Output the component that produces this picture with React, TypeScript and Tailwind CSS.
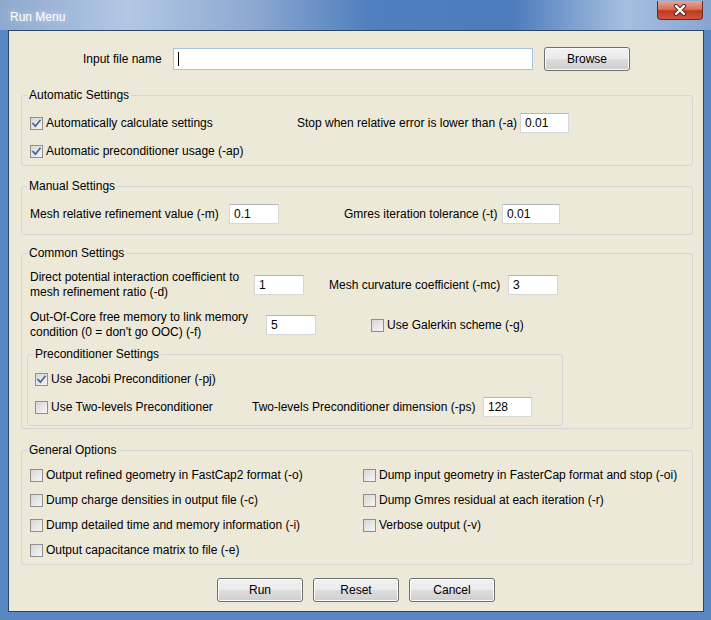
import React from "react";

function Check({ checked = false }: { checked?: boolean }) {
  return (
    <span className="w-[13px] h-[13px] shrink-0 border border-[#8e8f8f] bg-[linear-gradient(135deg,#d6d6d6,#f6f6f6)] flex items-center justify-center">
      {checked && (
        <svg width="11" height="11" viewBox="0 0 11 11" fill="none">
          <path
            d="M2 5.6 4.4 8.2 9 2.4"
            stroke="#4a62a0"
            strokeWidth="1.7"
            strokeLinecap="square"
          />
        </svg>
      )}
    </span>
  );
}

function CheckRow({ label, checked = false }: { label: string; checked?: boolean }) {
  return (
    <div className="h-[20px] flex items-center gap-[3px]">
      <Check checked={checked} />
      <span>{label}</span>
    </div>
  );
}

function Field({ value, className = "" }: { value: string; className?: string }) {
  return (
    <div
      className={`h-[20px] shrink-0 bg-white border border-[#d3d7dc] border-t-[#b3b7bd] pl-[4px] flex items-center ${className}`}
    >
      {value}
    </div>
  );
}

function Btn({ label }: { label: string }) {
  return (
    <button className="w-[86px] h-[24px] border border-[#707070] rounded-[3px] bg-[linear-gradient(#f2f2f2_0%,#ebebeb_50%,#dddddd_51%,#cfcfcf_100%)] shadow-[inset_0_0_0_1px_#fbfbfb] text-black">
      {label}
    </button>
  );
}

export default function App() {
  return (
    <div className="w-[711px] h-[620px] bg-[#5a87c3] flex flex-col font-['Liberation_Sans',Arial,sans-serif] text-[12px] text-black">
      {/* title bar */}
      <div className="h-[30px] shrink-0 flex items-start bg-[linear-gradient(90deg,#8ea9cd_0%,#b3c8e4_18%,#8eaad2_35%,#4f7fbe_52%,#4c7cbc_72%,#a6bfe0_88%,#86a5cf_100%)]">
        <span className="ml-[10px] mt-[8px] text-white text-[12px] [text-shadow:0_0_6px_rgba(255,255,255,0.6)]">
          Run Menu
        </span>
        <div className="ml-auto mr-[8px] mt-[1px] w-[46px] h-[19px] rounded-b-[4px] border border-[#6b2a1f] border-t-0 bg-[linear-gradient(#e7a595_0%,#d7705c_45%,#c0391f_55%,#d0553a_100%)] flex items-center justify-center">
          <svg width="14" height="12" viewBox="0 0 14 12">
            <path d="M3 2 11 10M11 2 3 10" stroke="#4a2420" strokeWidth="4.2" strokeLinecap="round" />
            <path d="M3 2 11 10M11 2 3 10" stroke="#ffffff" strokeWidth="2.4" strokeLinecap="round" />
          </svg>
        </div>
      </div>

      <div className="flex-1 pl-[8px] pr-[7px] pb-[8px] flex">
        <div className="flex-1 border border-[#2c4669] bg-[#ece9d8] flex flex-col">
          {/* input file row */}
          <div className="pt-[16px] h-[40px] flex items-center">
            <span className="ml-[74px] w-[90px]">Input file name</span>
            <div className="w-[360px] h-[22px] bg-white border border-[#a9c3dd] flex items-center pl-[4px]">
              <span className="w-[1px] h-[14px] bg-black" />
            </div>
            <div className="ml-[11px]">
              <Btn label="Browse" />
            </div>
          </div>

          {/* Automatic Settings */}
          <fieldset className="mt-[17px] ml-[12px] mr-[10px] border border-[#d2d6d9] rounded-[3px] px-[8px] pt-[11px] pb-[4px]">
            <legend className="ml-[-3px] px-[2px] leading-[14px]">Automatic Settings</legend>
            <div className="h-[20px] flex items-center">
              <div className="w-[267px]">
                <CheckRow label="Automatically calculate settings" checked />
              </div>
              <span className="w-[223px]">Stop when relative error is lower than (-a)</span>
              <Field value="0.01" className="w-[49px]" />
            </div>
            <div className="mt-[8px]">
              <CheckRow label="Automatic preconditioner usage (-ap)" checked />
            </div>
          </fieldset>

          {/* Manual Settings */}
          <fieldset className="mt-[13px] ml-[12px] mr-[10px] border border-[#d2d6d9] rounded-[3px] px-[8px] pt-[11px] pb-[10px]">
            <legend className="ml-[-3px] px-[2px] leading-[14px]">Manual Settings</legend>
            <div className="h-[20px] flex items-center">
              <span className="w-[199px]">Mesh relative refinement value (-m)</span>
              <Field value="0.1" className="w-[50px]" />
              <span className="ml-[65px] w-[158px]">Gmres iteration tolerance (-t)</span>
              <Field value="0.01" className="w-[58px]" />
            </div>
          </fieldset>

          {/* Common Settings */}
          <fieldset className="mt-[11px] ml-[12px] mr-[10px] border border-[#d2d6d9] rounded-[3px] px-[8px] pt-[10px] pb-[2px]">
            <legend className="ml-[-3px] px-[2px] leading-[14px]">Common Settings</legend>
            <div className="flex items-center">
              <span className="w-[224px] leading-[15px]">
                Direct potential interaction coefficient to
                <br />
                mesh refinement ratio (-d)
              </span>
              <Field value="1" className="w-[50px]" />
              <span className="ml-[25px] w-[179px]">Mesh curvature coefficient (-mc)</span>
              <Field value="3" className="w-[50px]" />
            </div>
            <div className="mt-[10px] flex items-center">
              <span className="w-[236px] leading-[15px]">
                Out-Of-Core free memory to link memory
                <br />
                condition (0 = don't go OOC) (-f)
              </span>
              <Field value="5" className="w-[50px]" />
              <div className="ml-[55px]">
                <CheckRow label="Use Galerkin scheme (-g)" />
              </div>
            </div>

            {/* Preconditioner Settings */}
            <fieldset className="mt-[7px] ml-[-3px] w-[536px] border border-[#d2d6d9] rounded-[3px] pl-[7px] pr-[8px] pt-[8px] pb-[8px]">
              <legend className="ml-[-2px] px-[2px] leading-[14px]">Preconditioner Settings</legend>
              <CheckRow label="Use Jacobi Preconditioner (-pj)" checked />
              <div className="mt-[8px] h-[20px] flex items-center">
                <div className="w-[217px]">
                  <CheckRow label="Use Two-levels Preconditioner" />
                </div>
                <span className="w-[231px]">Two-levels Preconditioner dimension (-ps)</span>
                <Field value="128" className="w-[49px]" />
              </div>
            </fieldset>
          </fieldset>

          {/* General Options */}
          <fieldset className="mt-[14px] ml-[12px] mr-[10px] border border-[#d2d6d9] rounded-[3px] px-[8px] pt-[8px] pb-[4px]">
            <legend className="ml-[-3px] px-[2px] leading-[14px]">General Options</legend>
            <div className="grid grid-cols-[333px_1fr] gap-y-[5px]">
              <CheckRow label="Output refined geometry in FastCap2 format (-o)" />
              <CheckRow label="Dump input geometry in FasterCap format and stop (-oi)" />
              <CheckRow label="Dump charge densities in output file (-c)" />
              <CheckRow label="Dump Gmres residual at each iteration (-r)" />
              <CheckRow label="Dump detailed time and memory information (-i)" />
              <CheckRow label="Verbose output (-v)" />
              <CheckRow label="Output capacitance matrix to file (-e)" />
            </div>
          </fieldset>

          {/* buttons */}
          <div className="mt-[13px] flex justify-center gap-[10px]">
            <Btn label="Run" />
            <Btn label="Reset" />
            <Btn label="Cancel" />
          </div>
        </div>
      </div>
    </div>
  );
}
